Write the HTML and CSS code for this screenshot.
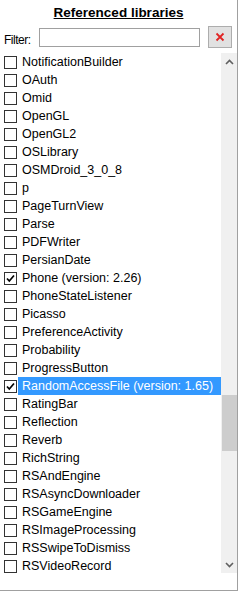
FILE: index.html
```html
<!DOCTYPE html>
<html lang="en">
<head>
    <meta charset="UTF-8">
    <meta name="viewport" content="width=device-width, initial-scale=1.0">
    <title>Referenced libraries</title>
    <link rel="stylesheet" href="styles.css">
</head>
<body>

    <div class="panel">
        <h2 class="title">Referenced libraries</h2>

        <div class="filter-row">
            <label class="filter-label" for="filter">Filter:</label>
            <input type="text" id="filter" class="filter-input" />
            <button class="clear-btn" title="Clear">
                <svg width="10" height="10" viewBox="0 0 10 10">
                    <path d="M1.5 1.5 L8.5 8.5 M8.5 1.5 L1.5 8.5" stroke="#e02424" stroke-width="1.8" fill="none"/>
                </svg>
            </button>
        </div>

        <div class="list-box">
            <ul class="lib-list" id="libList"></ul>
            <div class="scrollbar">
                <div class="scroll-btn">
                    <svg width="9" height="6" viewBox="0 0 9 6"><path d="M1 5 L4.5 1.5 L8 5" stroke="#606060" stroke-width="1.6" fill="none"/></svg>
                </div>
                <div class="scroll-track">
                    <div class="scroll-thumb"></div>
                </div>
                <div class="scroll-btn">
                    <svg width="9" height="6" viewBox="0 0 9 6"><path d="M1 1 L4.5 4.5 L8 1" stroke="#606060" stroke-width="1.6" fill="none"/></svg>
                </div>
            </div>
        </div>
    </div>

    <script>
        const libs = [
            "NotificationBuilder", "OAuth", "Omid", "OpenGL", "OpenGL2", "OSLibrary",
            "OSMDroid_3_0_8", "p", "PageTurnView", "Parse", "PDFWriter", "PersianDate",
            "Phone (version: 2.26)", "PhoneStateListener", "Picasso", "PreferenceActivity",
            "Probability", "ProgressButton", "RandomAccessFile (version: 1.65)", "RatingBar",
            "Reflection", "Reverb", "RichString", "RSAndEngine", "RSAsyncDownloader",
            "RSGameEngine", "RSImageProcessing", "RSSwipeToDismiss", "RSVideoRecord"
        ];
        const checked = ["Phone (version: 2.26)", "RandomAccessFile (version: 1.65)"];
        const selected = "RandomAccessFile (version: 1.65)";

        const list = document.getElementById("libList");
        libs.forEach((name) => {
            const li = document.createElement("li");
            li.className = "lib-item";
            const isChecked = checked.includes(name);
            li.innerHTML = `
                <span class="check">${isChecked ? '<svg width="11" height="11" viewBox="0 0 11 11"><path d="M2 5.5 L4.3 8 L9 2.5" stroke="#000" stroke-width="1.7" fill="none"/></svg>' : ''}</span>
                <span class="lib-name${name === selected ? ' selected' : ''}">${name}</span>
            `;
            list.appendChild(li);
        });
    </script>

</body>
</html>
```

FILE: styles.css
```css
body {
    margin: 0;
    background-color: #ffffff;
    font-family: 'Liberation Sans', Arial, sans-serif;
    color: #000000;
}

.panel {
    width: 237px;
    height: 590px;
    border-right: 1px solid #a0a0a0;
    border-bottom: 1px solid #a0a0a0;
    display: flex;
    flex-direction: column;
    overflow: hidden;
}

.title {
    margin: 0;
    padding-top: 5px;
    height: 16px;
    line-height: 16px;
    font-size: 13.5px;
    font-weight: bold;
    text-align: center;
    text-decoration: underline;
}

.filter-row {
    display: flex;
    align-items: center;
    height: 22px;
    margin-top: 5px;
}

.filter-label {
    width: 35px;
    padding-left: 4px;
    font-size: 12px;
    letter-spacing: -0.5px;
    padding-top: 5px;
}

.filter-input {
    box-sizing: border-box;
    width: 161px;
    height: 19px;
    margin: 0;
    padding: 0 3px;
    border: 1px solid #a0a0a0;
    background: #ffffff;
}

.clear-btn {
    box-sizing: border-box;
    width: 24px;
    height: 22px;
    margin: 0 0 0 8px;
    padding: 0;
    border: 1px solid #adadad;
    background-color: #e1e1e1;
    display: flex;
    align-items: center;
    justify-content: center;
}

.list-box {
    display: flex;
    margin-top: 5px;
    flex: 1;
}

.lib-list {
    list-style: none;
    margin: 0;
    padding: 0;
    width: 221px;
}

.lib-item {
    display: flex;
    align-items: center;
    height: 18px;
}

.check {
    box-sizing: border-box;
    width: 13px;
    height: 13px;
    margin-left: 4px;
    margin-right: 1px;
    border: 1px solid #333333;
    background: #ffffff;
    display: flex;
    align-items: center;
    justify-content: center;
}

.lib-name {
    flex: 1;
    height: 18px;
    line-height: 19px;
    padding-left: 4px;
    font-size: 12.5px;
    white-space: nowrap;
}

.lib-name.selected {
    background-color: #3399ff;
    color: #ffffff;
}

.scrollbar {
    width: 16px;
    height: 520px;
    background-color: #f0f0f0;
    display: flex;
    flex-direction: column;
}

.scroll-btn {
    height: 17px;
    display: flex;
    align-items: center;
    justify-content: center;
}

.scroll-track {
    flex: 1;
}

.scroll-thumb {
    margin: 325px 0 0 1px;
    width: 15px;
    height: 56px;
    background-color: #cdcdcd;
}
```
